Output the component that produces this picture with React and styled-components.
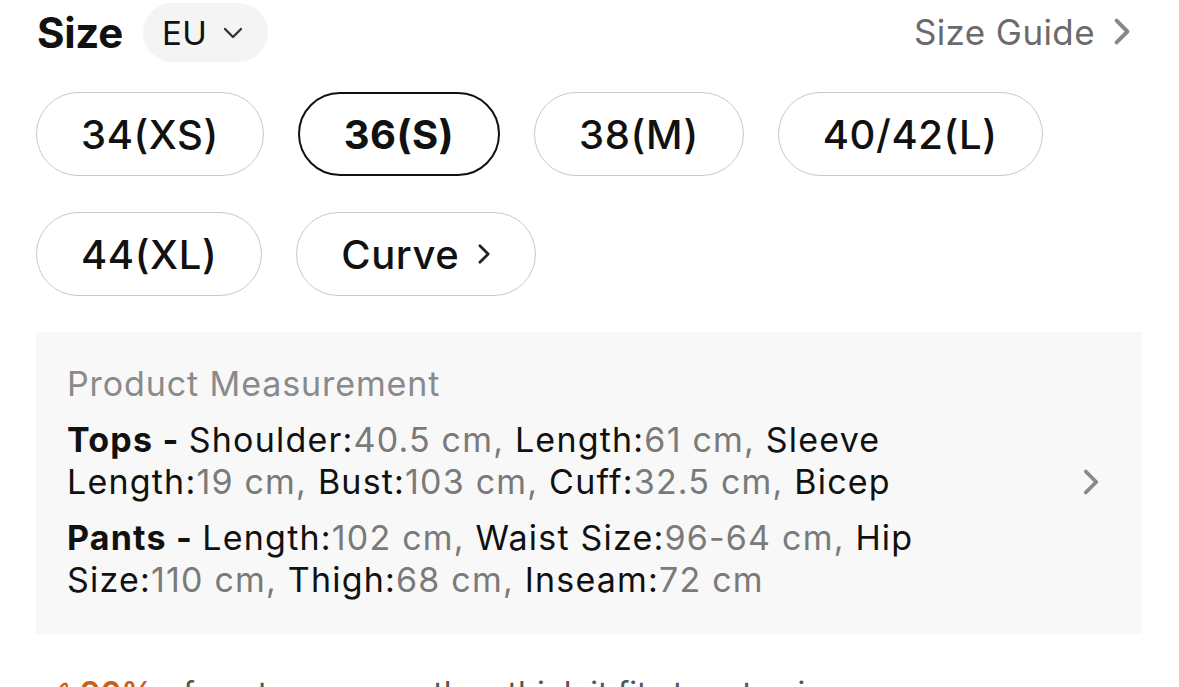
import React from 'react';
import styled, { createGlobalStyle } from 'styled-components';

const GlobalStyle = createGlobalStyle`
  html, body {
    margin: 0;
    padding: 0;
    background: #ffffff;
    overflow: hidden;
  }
  body {
    font-family: Inter, "Noto Sans", "Liberation Sans", sans-serif;
    color: #111;
  }
`;

const Page = styled.div`
  width: 1179px;
  height: 687px;
  padding: 3px 37px 0 36px;
  box-sizing: border-box;
  overflow: hidden;
`;

const Header = styled.div`
  display: flex;
  align-items: center;
  justify-content: space-between;
  height: 59px;
`;

const HeaderLeft = styled.div`
  display: flex;
  align-items: center;
  gap: 20px;
`;

const Title = styled.h2`
  margin: 0 0 0 1px;
  font-size: 42px;
  font-weight: 700;
  letter-spacing: -0.3px;
  color: #111;
`;

const UnitPill = styled.div`
  display: flex;
  align-items: center;
  gap: 16px;
  height: 59px;
  padding: 0 25px 0 19px;
  border-radius: 30px;
  background: #f4f4f4;
  font-size: 33px;
  letter-spacing: 0.5px;
  color: #111;
`;

const GuideLink = styled.div`
  display: flex;
  align-items: center;
  gap: 18px;
  font-size: 35px;
  letter-spacing: 0.4px;
  color: #6b6b6b;
  margin-top: -2px;
  margin-right: 11px;
`;

const SizeGrid = styled.div`
  display: flex;
  flex-wrap: wrap;
  column-gap: 34px;
  row-gap: 36px;
  margin-top: 30px;
  width: 1080px;
`;

const SizePill = styled.div`
  display: flex;
  align-items: center;
  justify-content: center;
  gap: 18px;
  height: 84px;
  box-sizing: border-box;
  padding: 0 44px;
  border-radius: 42px;
  border: ${p => (p.$active ? '2.5px solid #111' : '1.5px solid #c9c9c9')};
  font-size: 40px;
  font-weight: ${p => (p.$active ? 700 : 500)};
  color: #111;
  letter-spacing: ${p => (p.$active ? '0.4px' : '0.6px')};
`;

const MeasureBox = styled.div`
  display: flex;
  align-items: center;
  justify-content: space-between;
  margin-top: 36px;
  padding: 31px 42px 33px 31px;
  background: #f8f8f8;
`;

const MeasureText = styled.div`
  width: 880px;
  font-size: 34px;
  line-height: 42px;
  letter-spacing: 0.9px;
`;

const MeasureTitle = styled.div`
  color: #8a8a8a;
  margin-bottom: 14px;
`;

const Group = styled.p`
  margin: 0;
  letter-spacing: 1.2px;
  & + & {
    margin-top: 14px;
  }
`;

const Label = styled.span`
  color: #111;
`;

const Value = styled.span`
  color: #7a7a7a;
`;

const GroupName = styled.b`
  font-weight: 700;
  color: #111;
`;

const FitRow = styled.div`
  display: flex;
  align-items: center;
  gap: 10px;
  margin-top: 40px;
  padding-left: 14px;
  font-size: 32px;
  line-height: 40px;
`;

const FitPct = styled.span`
  color: #c8601a;
  font-weight: 600;
`;

const FitText = styled.span`
  color: #555;
`;

const Chevron = ({ w, h, color, sw }) => (
  <svg width={w} height={h} viewBox="0 0 10 16" fill="none">
    <path
      d="M2 2 L8 8 L2 14"
      stroke={color}
      strokeWidth={sw}
      strokeLinecap="round"
      strokeLinejoin="round"
    />
  </svg>
);

const ChevronDown = () => (
  <svg width="20" height="12" viewBox="0 0 20 12" fill="none">
    <path d="M2 2 L10 10 L18 2" stroke="#333" strokeWidth="2.4" strokeLinecap="round" strokeLinejoin="round" />
  </svg>
);

const sizes = [
  { label: '34(XS)' },
  { label: '36(S)', active: true },
  { label: '38(M)' },
  { label: '40/42(L)' },
  { label: '44(XL)' },
];

const tops = [
  ['Shoulder:', '40.5 cm, '],
  ['Length:', '61 cm, '],
  ['Sleeve Length:', '19 cm, '],
  ['Bust:', '103 cm, '],
  ['Cuff:', '32.5 cm, '],
  ['Bicep', ''],
];

const pants = [
  ['Length:', '102 cm, '],
  ['Waist Size:', '96-64 cm, '],
  ['Hip Size:', '110 cm, '],
  ['Thigh:', '68 cm, '],
  ['Inseam:', '72 cm'],
];

const renderPairs = pairs =>
  pairs.map(([l, v], i) => (
    <React.Fragment key={i}>
      <Label>{l}</Label>
      <Value>{v}</Value>
    </React.Fragment>
  ));

export default function App() {
  return (
    <>
      <GlobalStyle />
      <Page>
        <Header>
          <HeaderLeft>
            <Title>Size</Title>
            <UnitPill>
              EU
              <ChevronDown />
            </UnitPill>
          </HeaderLeft>
          <GuideLink>
            Size Guide
            <Chevron w={18} h={29} color="#888" sw={2.2} />
          </GuideLink>
        </Header>

        <SizeGrid>
          {sizes.map(s => (
            <SizePill key={s.label} $active={s.active}>
              {s.label}
            </SizePill>
          ))}
          <SizePill>
            Curve
            <Chevron w={14} h={22} color="#222" sw={2} />
          </SizePill>
        </SizeGrid>

        <MeasureBox>
          <MeasureText>
            <MeasureTitle>Product Measurement</MeasureTitle>
            <Group>
              <GroupName>Tops - </GroupName>
              {renderPairs(tops)}
            </Group>
            <Group>
              <GroupName>Pants - </GroupName>
              {renderPairs(pants)}
            </Group>
          </MeasureText>
          <Chevron w={18} h={28} color="#8a8a8a" sw={2.2} />
        </MeasureBox>

        <FitRow>
          <svg width="20" height="36" viewBox="0 0 20 36" fill="none">
            <path d="M4 34 C4 24 8 12 14 8 C18 6 18 14 12 18" stroke="#c8601a" strokeWidth="2.4" strokeLinecap="round" />
          </svg>
          <FitPct>90%</FitPct>
          <FitText>of customers say they think it fits true to size</FitText>
        </FitRow>
      </Page>
    </>
  );
}
